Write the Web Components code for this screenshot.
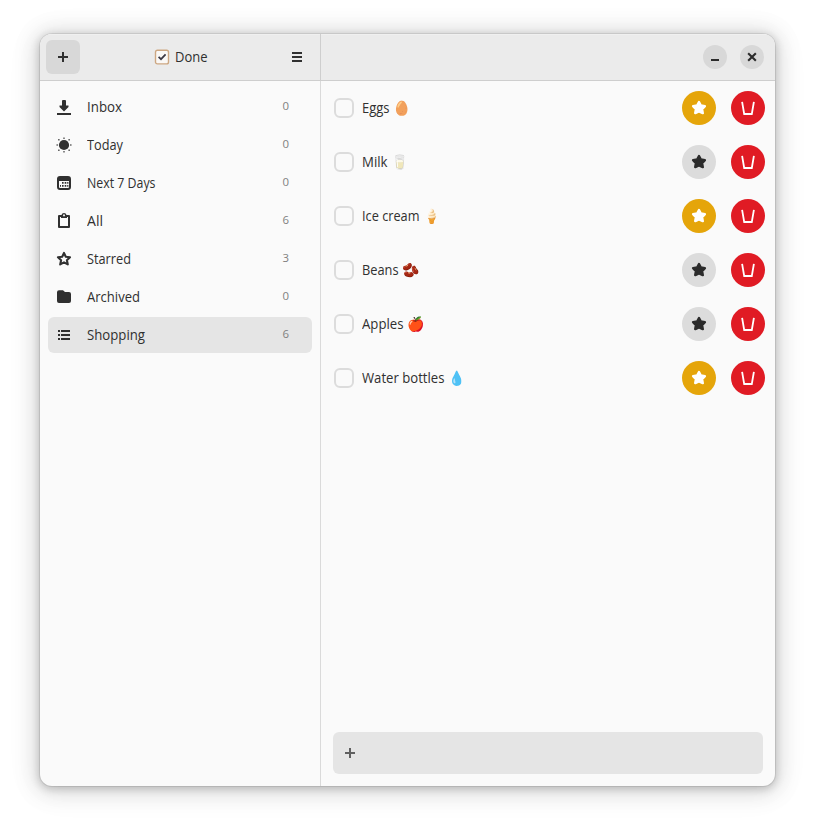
<!DOCTYPE html>
<html lang="en">
<head>
<meta charset="utf-8">
<title>Done</title>
<style>
html,body{margin:0;height:100%;background:#fff}
body{width:815px;height:832px;overflow:hidden;box-sizing:border-box;padding:34px 40px 46px;font:14.6px/20px "Open Sans","Noto Sans",sans-serif;color:#303030}
</style>
</head>
<body>
<done-window></done-window>
<script>
const define = (name, html, setup) => {
  const template = document.createElement('template');
  template.innerHTML = html;
  customElements.define(name, class extends HTMLElement {
    connectedCallback() {
      if (this.shadowRoot) return;
      this.attachShadow({mode: 'open'}).append(template.content.cloneNode(true));
      if (setup) setup(this, this.shadowRoot);
    }
  });
};

const star = 'M8 2 9.9 5.5 13.9 6.2 11.1 9.1 11.8 13.1 8 11.4 4.2 13.1 4.9 9.1 2.1 6.2 6.1 5.5Z';
const icons = {
  plus: '<path d="M7 3h2v4h4v2H9v4H7V9H3V7h4z"/>',
  menu: '<path d="M3 3h10v2H3zM3 7h10v2H3zM3 11h10v2H3z"/>',
  minimize: '<path d="M4 10h8v2H4z"/>',
  close: '<path d="m4.9 4.9 6.2 6.2m0-6.2-6.2 6.2" fill="none" stroke="currentColor" stroke-width="2.1" stroke-linecap="square"/>',
  inbox: '<path d="M6 2q0-1 1-1h2q1 0 1 1v4.5h2.5V8L8 12.5 3.5 8V6.5H6zM1 14h14v2H1z"/>',
  today: '<circle cx="8" cy="8" r="5.1"/><path d="M7.3.5h1.4v1.4H7.3zM7.3 14.1h1.4v1.4H7.3zM.5 7.3h1.4v1.4H.5zM14.1 7.3h1.4v1.4h-1.4zM2.1 2.1h1.5v1.5H2.1zM12.4 2.1h1.5v1.5h-1.5zM2.1 12.4h1.5v1.5H2.1zM12.4 12.4h1.5v1.5h-1.5z" opacity=".8"/>',
  calendar: '<path fill-rule="evenodd" d="M4 1h8q3 0 3 3v8q0 3-3 3H4q-3 0-3-3V4q0-3 3-3zM3 6v6q0 1 1 1h8q1 0 1-1V6z"/><path d="M6 7h1.6v1.8H6zM8.7 7h1.6v1.8H8.7zM11.2 7h1.2v1.8h-1.2zM4 10h1v1.8H4zM6 10h1.6v1.8H6zM8.7 10h1.6v1.8H8.7zM11.2 10h1.2v1.8h-1.2z"/>',
  clipboard: '<path fill-rule="evenodd" d="M3 2h2.5q.4-2 2.5-2t2.5 2H13q1 0 1 1v11q0 1-1 1H3q-1 0-1-1V3q0-1 1-1zM4 4v9h8V4h-1v1H5V4zM7.1 1.5v1.7h1.8V1.5z"/>',
  starred: '<path d="M8 1.9 9.8 5.8 14 6.3 10.9 9.2 11.8 13.4 8 11.3 4.2 13.4 5.1 9.2 2 6.3 6.2 5.8Z" fill="none" stroke="currentColor" stroke-width="2.1" stroke-linejoin="round"/>',
  folder: '<path d="M3 1.2h4L9 3h4q2 0 2 2v7q0 2-2 2H3q-2 0-2-2V3.2q0-2 2-2z"/>',
  list: '<path d="M2 3h2v2H2zM5 3h9v2H5zM2 7h2v2H2zM5 7h9v2H5zM2 11h2v2H2zM5 11h9v2H5z"/>',
  star: '<path d="' + star + '" stroke="currentColor" stroke-width="2.4" stroke-linejoin="round"/>',
  trash: '<path d="M2.1 1.9 4.2 14h7.6L13.9 1.9" fill="none" stroke="currentColor" stroke-width="1.8"/>',
  app: '<rect x="1.5" y="1.3" width="13" height="13.6" rx="1.9" fill="#faf8f6" stroke="#cda782" stroke-width="1.4"/><path d="m4.6 7.8 2.4 2.4 4.6-4.9" fill="none" stroke="#3b3844" stroke-width="1.7"/>'
};

define('ui-icon', `<style>:host{display:block;width:16px;height:16px;flex:none}svg{display:block;width:16px;height:16px;fill:currentColor}</style><svg viewBox="0 0 16 16"></svg>`,
  (host, root) => { root.querySelector('svg').innerHTML = icons[host.getAttribute('name')]; });

// A label condensed horizontally to a given width.
define('ui-label', `<style>:host{display:block;flex:none;white-space:nowrap;height:20px;margin-bottom:2px}span{display:inline-block;transform-origin:0 50%}</style><span><slot></slot></span>`,
  (host, root) => {
    const span = root.querySelector('span'), width = +host.getAttribute('width');
    span.style.transform = `scaleX(${width / span.getBoundingClientRect().width})`;
    host.style.width = width + 'px';
  });

define('nav-row', `<style>
:host{display:flex;align-items:center;height:36px;border-radius:6px;padding:0 23px 0 8px;box-sizing:border-box}
:host([selected]){background:#e5e5e5}
.name{margin-left:15px;flex:1}
.count{font-size:11.4px;line-height:16px;color:#808080;margin-bottom:2px}
</style><ui-icon></ui-icon><div class="name"><slot></slot></div><div class="count"></div>`,
  (host, root) => {
    root.querySelector('.count').textContent = host.getAttribute('count');
  });

define('round-button', `<style>
:host{display:grid;place-items:center;width:34px;height:34px;border-radius:50%;background:#dcdcdc;color:#2b2b2b;flex:none}
:host([kind=gold]){background:#e5a50a;color:#fff}
:host([kind=red]){background:#e01b24;color:#fff}
:host([kind=window]){width:24px;height:24px;background:#d8d8d8}
</style><slot></slot>`);

define('task-row', `<style>
:host{display:flex;align-items:center;height:54px;box-sizing:border-box;padding:0 10px 0 13px}
.check{width:20px;height:20px;border:2px solid #dcdcdc;border-radius:6px;box-sizing:border-box;margin-right:8px}
.text{display:flex;flex:1;align-items:center}
.actions{display:flex;gap:15px}
::slotted(.emoji){font-size:14px;margin-left:3.5px}
</style><div class="check"></div><div class="text"><slot></slot></div><div class="actions"><slot name="actions"></slot></div>`);

define('done-window', `<style>
:host{display:grid;grid-template:47px 1fr/280px 1fr;width:735px;height:752px;border-radius:12px;overflow:hidden;background:#fafafa;box-shadow:0 0 0 1px rgba(0,0,0,.08),0 2px 8px 1px rgba(0,0,0,.18),0 2px 22px 5px rgba(0,0,0,.13),0 3px 36px 8px rgba(0,0,0,.03)}
header{display:flex;align-items:center;background:#ebebeb;border-bottom:1px solid #cecece;box-shadow:inset 0 1px #f0f0f0}
.left{padding:0 15px 0 6px;justify-content:space-between}
.add{width:34px;height:34px;background:#d8d8d8;border-radius:6px;display:grid;place-items:center}
.title{display:flex;align-items:center;gap:5px;margin-left:-8px}
.right{justify-content:flex-end;gap:13px;padding-right:11px;border-left:1px solid #cecece}
nav{display:flex;flex-direction:column;gap:2px;padding:8px}
main{display:flex;flex-direction:column;border-left:1px solid #dadada}
footer{margin:auto 12px 12px;height:42px;border-radius:6px;background:#e5e5e5;color:#606060;display:flex;align-items:center;padding-left:9px;box-sizing:border-box}
</style>
<header class="left"><div class="add"><ui-icon name="plus"></ui-icon></div><div class="title"><ui-icon name="app"></ui-icon><ui-label width="32.5">Done</ui-label></div><ui-icon name="menu"></ui-icon></header>
<header class="right"><round-button kind="window"><ui-icon name="minimize"></ui-icon></round-button><round-button kind="window"><ui-icon name="close"></ui-icon></round-button></header>
<nav></nav>
<main><footer><ui-icon name="plus"></ui-icon></footer></main>`,
  (host, root) => {
    const nav = root.querySelector('nav'), main = root.querySelector('main');
    for (const [name, count, icon, width] of [
      ['Inbox', 0, 'inbox', 35], ['Today', 0, 'today', 36], ['Next 7 Days', 0, 'calendar', 68.5],
      ['All', 6, 'clipboard', 16], ['Starred', 3, 'starred', 44], ['Archived', 0, 'folder', 53], ['Shopping', 6, 'list', 58]]) {
      const row = document.createElement('nav-row');
      row.setAttribute('count', count);
      if (name === 'Shopping') row.setAttribute('selected', '');
      row.innerHTML = `<ui-label width="${width}">${name}</ui-label>`;
      nav.append(row);
      const glyph = document.createElement('ui-icon');
      glyph.setAttribute('name', icon);
      row.shadowRoot.querySelector('ui-icon').replaceWith(glyph);
    }
    for (const [name, width, emoji, gold] of [
      ['Eggs', 27.5, '🥚', 1], ['Milk', 25.5, '🥛', 0], ['Ice cream', 57.5, '🍦', 1],
      ['Beans', 36.5, '🫘', 0], ['Apples', 41.5, '🍎', 0], ['Water bottles', 82.5, '💧', 1]]) {
      const row = document.createElement('task-row');
      row.innerHTML = `<ui-label width="${width}">${name}</ui-label><span class="emoji">${emoji}</span>
<round-button slot="actions" ${gold ? 'kind="gold"' : ''}><ui-icon name="star"></ui-icon></round-button>
<round-button slot="actions" kind="red"><ui-icon name="trash"></ui-icon></round-button>`;
      main.insertBefore(row, main.lastElementChild);
    }
  });
</script>
</body>
</html>
